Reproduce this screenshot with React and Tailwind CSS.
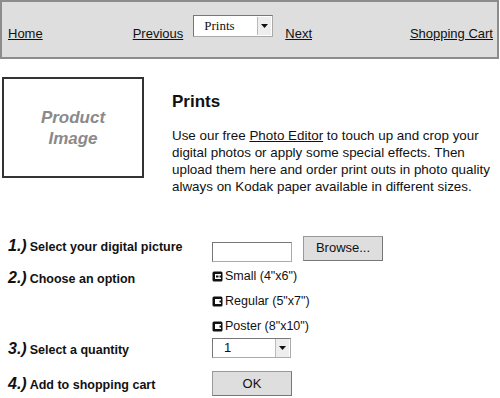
import { useState } from 'react';

function Radio({ checked }) {
  return (
    <svg width="11" height="11" viewBox="0 0 11 11" className="shrink-0">
      <rect x="0.5" y="0.5" width="10" height="10" rx="1.5" fill="#111" />
      <path d="M3 3h6v1.5H7.5v2H9V8H3z" fill="#fff" />
      {checked && <rect x="4" y="4.5" width="2.5" height="2" fill="#111" />}
    </svg>
  );
}

function Arrow() {
  return (
    <span className="flex h-[18px] w-[14px] items-center justify-center border-l border-[#bbb] bg-[#eee]">
      <svg width="7" height="4" viewBox="0 0 7 4">
        <path d="M0 0h7L3.5 4z" fill="#111" />
      </svg>
    </span>
  );
}

const SIZES = ['Small (4"x6")', 'Regular (5"x7")', 'Poster (8"x10")'];

function Step({ n, children, className = '' }) {
  return (
    <div className={`flex w-[212px] shrink-0 items-baseline gap-[3px] pl-2 ${className}`}>
      <span className="text-[16px] font-bold italic">{n}.)</span>
      <span className="text-[12.5px] font-bold">{children}</span>
    </div>
  );
}

export default function App() {
  const [size, setSize] = useState(0);

  return (
    <div className="h-[398px] w-[500px] overflow-hidden bg-white text-[#111]" style={{ fontFamily: '"Liberation Sans", Arial, sans-serif' }}>
      <nav className="flex h-[59px] w-[499px] items-end border-2 border-[#8c8c8c] bg-[#dedede] pb-[14px] text-[13px]">
        <a className="ml-[6px] underline">Home</a>
        <a className="ml-[90px] underline">Previous</a>
        <div className="mb-[6px] ml-[10px] flex h-[22px] w-[80px] items-center justify-between border border-[#aaa] border-l-[#777] border-t-[#777] bg-white pl-[10px] pr-[1px]">
          <span className="text-[13px]" style={{ fontFamily: '"Liberation Serif", serif' }}>Prints</span>
          <Arrow />
        </div>
        <a className="ml-[12px] underline">Next</a>
        <a className="ml-auto mr-[4px] underline">Shopping Cart</a>
      </nav>

      <section className="mt-[18px] flex h-[118px] items-start">
        <div className="ml-[2px] flex h-[101px] w-[142px] items-center justify-center border-2 border-[#333]">
          <span className="text-center text-[17px] font-bold italic leading-[21px] text-[#8a8a8a]">Product<br />Image</span>
        </div>
        <div className="ml-[28px] mt-[14px]">
          <h1 className="text-[17px] font-bold leading-[22px]">Prints</h1>
          <p className="mt-[14px] whitespace-nowrap text-[13.4px] leading-[17px]">
            Use our free <span className="underline">Photo Editor</span> to touch up and crop your<br />
            digital photos or apply some special effects. Then<br />
            upload them here and order print outs in photo quality<br />
            always on Kodak paper available in different sizes.
          </p>
        </div>
      </section>

      <form className="mt-[38px] flex flex-col">
        <div className="flex h-[30px] items-center">
          <Step n={1} className="-mt-[5px]">Select your digital picture</Step>
          <div className="mt-[7px] h-[20px] w-[80px] border border-[#aaa] border-l-[#777] border-t-[#777] bg-white" />
          <button type="button" className="ml-[11px] h-[25px] w-[80px] border border-[#999] border-b-[#777] border-r-[#777] bg-[#dedede] text-[13px]">Browse...</button>
        </div>

        <div className="flex">
          <Step n={2} className="mt-[3px]">Choose an option</Step>
          <div className="flex flex-col">
            {SIZES.map((s, i) => (
              <label key={s} className="flex h-[25px] items-center gap-[2px] pt-[2px] text-[12.5px]" onClick={() => setSize(i)}>
                <Radio checked={size === i} />
                {s}
              </label>
            ))}
          </div>
        </div>

        <div className="flex h-[20px] items-center">
          <Step n={3} className="mt-[2px]">Select a quantity</Step>
          <div className="flex h-[20px] w-[79px] items-center justify-between border border-[#aaa] border-l-[#777] border-t-[#777] bg-white pl-[11px] pr-[1px] text-[13px]">
            <span>1</span>
            <Arrow />
          </div>
        </div>

        <div className="mt-[13px] flex h-[25px] items-center">
          <Step n={4}>Add to shopping cart</Step>
          <button type="button" className="h-[25px] w-[80px] border border-[#999] border-b-[#777] border-r-[#777] bg-[#dedede] text-[13px]">OK</button>
        </div>
      </form>
    </div>
  );
}
